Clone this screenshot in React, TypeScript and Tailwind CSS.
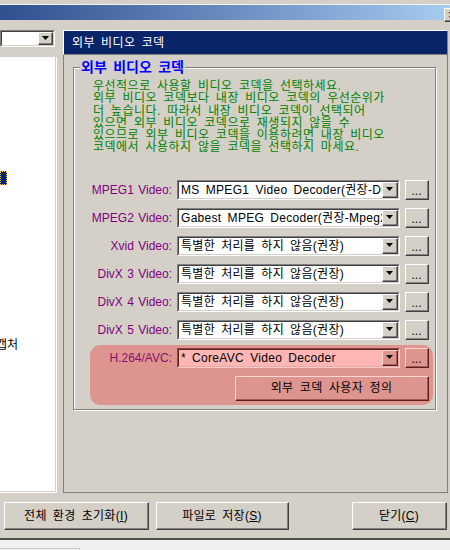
import type { ReactNode } from 'react'

const rows = [
  { label: 'MPEG1 Video:', value: 'MS MPEG1 Video Decoder(권장-DirectShow)' },
  { label: 'MPEG2 Video:', value: 'Gabest MPEG Decoder(권장-Mpeg2 Splitter)' },
  { label: 'Xvid Video:', value: '특별한 처리를 하지 않음(권장)' },
  { label: 'DivX 3 Video:', value: '특별한 처리를 하지 않음(권장)' },
  { label: 'DivX 4 Video:', value: '특별한 처리를 하지 않음(권장)' },
  { label: 'DivX 5 Video:', value: '특별한 처리를 하지 않음(권장)' },
]

const notice = [
  '우선적으로 사용할 비디오 코덱을 선택하세요.',
  '외부 비디오 코덱보다 내장 비디오 코덱의 우선순위가',
  '더 높습니다. 따라서 내장 비디오 코덱이 선택되어',
  '있으면 외부 비디오 코덱으로 재생되지 않을 수',
  '있으므로 외부 비디오 코덱을 이용하려면 내장 비디오',
  '코덱에서 사용하지 않을 코덱을 선택하지 마세요.',
]

function Arrow() {
  return (
    <svg width="7" height="4" viewBox="0 0 7 4" className="block">
      <path d="M0 0h7L3.5 4z" fill="#000" />
    </svg>
  )
}

// classic raised 3d button
function Raised({ className, pink, children }: { className: string; pink?: boolean; children?: ReactNode }) {
  return (
    <div
      className={`${className} border ${
        pink
          ? 'border-t-[#fbd6d3] border-l-[#fbd6d3] border-b-[#5a2020] border-r-[#5a2020] bg-[#df958f]'
          : 'border-t-white border-l-white border-b-[#404040] border-r-[#404040] bg-[#d4d0c8]'
      }`}
    >
      <div
        className={`h-full w-full flex items-center justify-center border-b border-r ${
          pink ? 'border-b-[#a35a55] border-r-[#a35a55]' : 'border-b-[#808080] border-r-[#808080]'
        }`}
      >
        {children}
      </div>
    </div>
  )
}

function Combo({ text, pink }: { text: string; pink?: boolean }) {
  return (
    <div
      className={`h-[20px] w-[223px] border ${
        pink
          ? 'border-t-[#8c4646] border-l-[#8c4646] border-b-[#f7c9c5] border-r-[#f7c9c5]'
          : 'border-t-[#808080] border-l-[#808080] border-b-white border-r-white'
      }`}
    >
      <div
        className={`h-full flex border ${
          pink
            ? 'border-t-[#5a2020] border-l-[#5a2020] border-b-[#e7aaa5] border-r-[#e7aaa5] bg-[#ffb6b4]'
            : 'border-t-[#404040] border-l-[#404040] border-b-[#d4d0c8] border-r-[#d4d0c8] bg-white'
        }`}
      >
        <span className="flex-1 overflow-hidden whitespace-nowrap pl-[2px] text-[12px] leading-[16px] tracking-[0.3px] text-black">
          {text}
        </span>
        <Raised className="w-[16px] h-full" pink={pink}>
          <Arrow />
        </Raised>
      </div>
    </div>
  )
}

function Dots({ pink }: { pink?: boolean }) {
  return (
    <Raised className="w-[24px] h-[20px] ml-[5px]" pink={pink}>
      <span className="text-[12px] leading-[12px] pt-[4px] text-black">...</span>
    </Raised>
  )
}

export default function App() {
  return (
    <div className="w-[450px] h-[550px] overflow-hidden bg-[#d4d0c8] flex flex-col [word-spacing:2.5px] font-['Liberation_Sans','Noto_Sans_CJK_KR',sans-serif]">
      <div className="h-[5px] border-b border-b-[#f4f2ee]" />
      <div className="h-[15px] relative bg-gradient-to-r from-[#2f4f8f] to-[#a8cbf0]">
        <Raised className="absolute right-[-10px] top-[3px] w-[16px] h-[14px]">
          <span className="text-[12px] leading-[12px] text-black">×</span>
        </Raised>
      </div>

      <div className="h-[473px] pt-[10px] flex">
        {/* left column */}
        <div className="w-[57px] flex flex-col">
          <div className="h-[17px] w-[55px] border border-t-[#808080] border-l-[#808080] border-b-white border-r-white">
            <div className="h-full flex justify-end border border-t-[#404040] border-l-[#404040] border-b-[#d4d0c8] border-r-[#d4d0c8] bg-white">
              <Raised className="w-[15px] h-full">
                <Arrow />
              </Raised>
            </div>
          </div>
          <div className="mt-[10px] flex-1 border-r border-b border-r-white border-b-white">
            <div className="h-full bg-white border-r border-b border-r-[#d4d0c8] border-b-[#d4d0c8] pt-[114px]">
              <div className="w-[7px] h-[14px] bg-[#0a246a] border border-dotted border-[#e8d060]" />
              <div className="mt-[153px] ml-[-4px] text-[12px] leading-[14px] text-black whitespace-nowrap">캡처</div>
            </div>
          </div>
        </div>

        {/* right column */}
        <div className="ml-[6px] w-[385px] flex flex-col">
          <div className="h-[25px] bg-[#0a246a] border border-t-white border-l-white border-b-[#808080] border-r-[#808080] flex items-center pl-[8px]">
            <span className="text-[12px] tracking-[0.4px] text-white">외부 비디오 코덱</span>
          </div>
          <div className="flex-1 border-l border-b border-r border-[#808080] pl-[9px]">
            <fieldset className="mt-[5px] w-[363px] border border-[#808080] shadow-[inset_1px_1px_0_#fff,1px_1px_0_#fff]">
              <legend className="ml-[6px] px-[1px] bg-[#d4d0c8] text-[14px] leading-[14px] font-bold text-[#0000ff]">
                외부 비디오 코덱
              </legend>
              <div className="pt-[6px] pl-[19px] text-[12px] leading-[12.3px] tracking-[0.5px] text-[#008000]">
                {notice.map((l) => (
                  <div key={l} className="whitespace-nowrap">
                    {l}
                  </div>
                ))}
              </div>

              <div className="mt-[26px] flex flex-col gap-[8px]">
                {rows.map((r) => (
                  <div key={r.label} className="flex items-center h-[20px]">
                    <span className="w-[99px] pr-[1px] text-right text-[12px] text-[#800080] whitespace-nowrap [word-spacing:1px]">
                      {r.label}
                    </span>
                    <div className="ml-[4px]">
                      <Combo text={r.value} />
                    </div>
                    <Dots />
                  </div>
                ))}
              </div>

              <div className="mt-[5px] mb-[4px] ml-[16px] w-[343px] rounded-[10px] bg-[#de948f] pt-[3px] pb-[4px] pr-[4px]">
                <div className="flex items-center h-[20px]">
                  <span className="w-[83px] pr-[1px] text-right text-[12px] text-[#8a0f6a] whitespace-nowrap">
                    H.264/AVC:
                  </span>
                  <div className="ml-[4px]">
                    <Combo text="* CoreAVC Video Decoder" pink />
                  </div>
                  <Dots pink />
                </div>
                <div className="mt-[8px] flex justify-end">
                  <Raised className="w-[194px] h-[25px]" pink>
                    <span className="text-[12px] tracking-[0.4px] text-black">외부 코덱 사용자 정의</span>
                  </Raised>
                </div>
              </div>
            </fieldset>
          </div>
        </div>
      </div>

      <div className="mt-[9px] h-[28px] flex">
        <Raised className="ml-[4px] w-[145px] h-full">
          <span className="text-[12px] tracking-[0.3px] text-black">
            전체 환경 초기화(<u>I</u>)
          </span>
        </Raised>
        <Raised className="ml-[7px] w-[133px] h-full">
          <span className="text-[12px] tracking-[0.3px] text-black">
            파일로 저장(<u>S</u>)
          </span>
        </Raised>
        <Raised className="ml-[63px] w-[95px] h-full">
          <span className="text-[12px] tracking-[0.3px] text-black">
            닫기(<u>C</u>)
          </span>
        </Raised>
      </div>

      <div className="mt-[8px] h-[2px] bg-[#505050]" />
      <div className="flex-1 bg-[#f0f0f0] pt-[8px]">
        <div className="w-[80px] h-full border-t border-r border-[#c8c8c8] bg-[#f4f4f4]" />
      </div>
    </div>
  )
}
